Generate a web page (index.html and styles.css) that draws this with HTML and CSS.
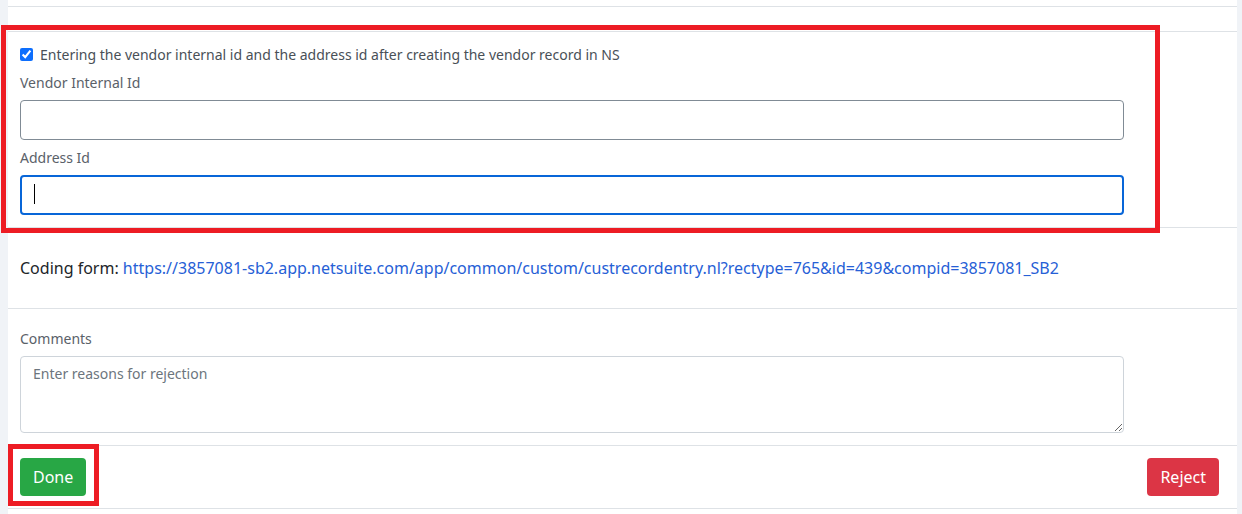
FILE: index.html
```html
<!DOCTYPE html>
<html lang="en">
<head>
    <meta charset="UTF-8">
    <meta name="viewport" content="width=device-width, initial-scale=1.0">
    <title>Vendor approval</title>
    <link rel="stylesheet" href="styles.css">
</head>
<body>
    <div class="page">
        <div class="card">
            <div class="section section-top"></div>
            <div class="section section-spacer"></div>

            <div class="section section-form">
                <label class="check-row">
                    <input type="checkbox" checked>
                    <span>Entering the vendor internal id and the address id after creating the vendor record in NS</span>
                </label>
                <div class="form-group">
                    <label class="field-label" for="vendorId">Vendor Internal Id</label>
                    <input type="text" id="vendorId" class="field">
                </div>
                <div class="form-group">
                    <label class="field-label" for="addressId">Address Id</label>
                    <div class="field-wrap">
                        <input type="text" id="addressId" class="field field-focus">
                        <span class="caret"></span>
                    </div>
                </div>
            </div>

            <div class="section section-coding">
                Coding form: <a href="#">https://3857081-sb2.app.netsuite.com/app/common/custom/custrecordentry.nl?rectype=765&amp;id=439&amp;compid=3857081_SB2</a>
            </div>

            <div class="section section-comments">
                <label class="field-label" for="comments">Comments</label>
                <textarea id="comments" class="field field-area" placeholder="Enter reasons for rejection"></textarea>
            </div>

            <div class="section section-footer">
                <button class="btn btn-done">Done</button>
                <button class="btn btn-reject">Reject</button>
            </div>
        </div>

        <!-- annotation boxes -->
        <div class="mark mark-form"></div>
        <div class="mark mark-done"></div>
    </div>
</body>
</html>
```

FILE: styles.css
```css
body {
    margin: 0;
    padding: 0;
    background-color: #f0f3f7;
    font-family: "Noto Sans", "Open Sans", sans-serif;
    color: #212529;
}

.page {
    position: relative;
    padding: 0 5px 0 8px;
    height: 514px;
    box-sizing: border-box;
}

.card {
    background-color: #fff;
    height: 514px;
}

.section {
    border-bottom: 1px solid #dee2e6;
}

.section-top {
    height: 6px;
}

.section-spacer {
    height: 24px;
}

.section-form {
    padding: 12px 12px 12px 12px;
}

.check-row {
    display: flex;
    align-items: center;
    gap: 7px;
    font-size: 14px;
    line-height: 21px;
    color: #495057;
}

.check-row input {
    margin: 0;
    width: 13px;
    height: 13px;
    accent-color: #0d6efd;
}

.form-group {
    margin-top: 7px;
}

.field-label {
    display: block;
    font-size: 14px;
    line-height: 21px;
    color: #5a6169;
    margin-bottom: 7px;
}

.field {
    display: block;
    width: 1104px;
    height: 40px;
    box-sizing: border-box;
    border: 1px solid #808b95;
    border-radius: 4px;
    padding: 6px 12px;
    font-family: inherit;
    font-size: 14px;
    outline: none;
    background: #fff;
}

.field-wrap {
    position: relative;
}

.field-focus {
    border: 2px solid #0866d8;
}

.caret {
    position: absolute;
    left: 14px;
    top: 9px;
    width: 1px;
    height: 20px;
    background: #000;
}

.section-coding {
    padding: 28px 12px;
    font-size: 16px;
    line-height: 24px;
}

.section-coding a {
    color: #2660d6;
    text-decoration: none;
}

.section-comments {
    padding: 19px 12px 12px 12px;
}

.field-area {
    height: 77px;
    border-color: #ced4da;
    padding: 7px 12px;
    resize: vertical;
}

.field-area::placeholder {
    color: #6c757d;
}

.section-footer {
    display: flex;
    justify-content: space-between;
    padding: 12px 18px 12px 12px;
}

.btn {
    height: 38px;
    padding: 0 13px;
    border: none;
    border-radius: 4px;
    color: #fff;
    font-family: inherit;
    font-size: 16px;
    cursor: pointer;
}

.btn-done {
    background-color: #28a745;
}

.btn-reject {
    background-color: #dc3545;
}

/* red annotation frames */
.mark {
    position: absolute;
    border: 5px solid #ed1c24;
    box-sizing: border-box;
}

.mark-form {
    left: 1px;
    top: 25px;
    width: 1159px;
    height: 208px;
}

.mark-done {
    left: 8px;
    top: 444px;
    width: 91px;
    height: 62px;
}
```
